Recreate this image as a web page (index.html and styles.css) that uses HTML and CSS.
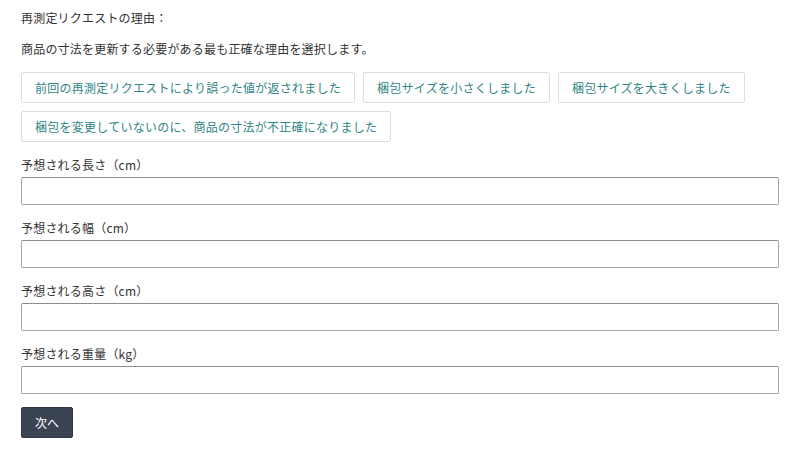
FILE: index.html
```html
<!DOCTYPE html>
<html lang="ja">
<head>
<meta charset="utf-8">
<link rel="stylesheet" href="styles.css">
</head>
<body>
<div class="wrap">
  <p class="title">再測定リクエストの理由：</p>
  <p class="desc">商品の寸法を更新する必要がある最も正確な理由を選択します。</p>
  <div class="options">
    <button class="opt">前回の再測定リクエストにより誤った値が返されました</button>
    <button class="opt">梱包サイズを小さくしました</button>
    <button class="opt">梱包サイズを大きくしました</button>
    <button class="opt">梱包を変更していないのに、商品の寸法が不正確になりました</button>
  </div>
  <div class="field">
    <label class="label">予想される長さ（cm）</label>
    <input class="input" type="text">
  </div>
  <div class="field">
    <label class="label">予想される幅（cm）</label>
    <input class="input" type="text">
  </div>
  <div class="field">
    <label class="label">予想される高さ（cm）</label>
    <input class="input" type="text">
  </div>
  <div class="field">
    <label class="label">予想される重量（kg）</label>
    <input class="input" type="text">
  </div>
  <button class="next">次へ</button>
</div>
</body>
</html>
```
FILE: styles.css
```css
html, body {
  margin: 0;
  background: #fff;
}
body {
  font-family: "Noto Sans CJK JP", "Noto Sans", sans-serif;
  font-size: 12px;
  color: #333;
  letter-spacing: 0.2px;
}
.wrap {
  padding: 9px 21px;
  display: flex;
  flex-direction: column;
  align-items: flex-start;
}
.title, .desc {
  margin: 0;
  line-height: 18px;
}
.desc {
  margin-top: 13px;
}
.options {
  margin-top: 14px;
  display: flex;
  flex-wrap: wrap;
  gap: 8px;
}
.opt {
  height: 31px;
  padding: 0 13px;
  border: 1px solid #dddddd;
  border-radius: 2px;
  background: #fff;
  color: #2f8585;
  font-family: inherit;
  font-size: 12px;
  letter-spacing: 0.25px;
  line-height: 29px;
}
.field {
  align-self: stretch;
  display: flex;
  flex-direction: column;
  margin-top: 14px;
}
.label {
  line-height: 18px;
  margin-bottom: 3px;
}
.input {
  box-sizing: border-box;
  height: 28px;
  width: 100%;
  border: 1px solid #a6a6a6;
  border-top-color: #8c8c8c;
  border-radius: 2px;
  padding: 0 6px;
  font-family: inherit;
  font-size: 12px;
  background: #fff;
}
.next {
  margin-top: 13px;
  height: 31px;
  padding: 0 13px;
  border: 1px solid #2f3744;
  border-radius: 2px;
  background: #3b4453;
  color: #fff;
  font-family: inherit;
  font-size: 12px;
}
```
